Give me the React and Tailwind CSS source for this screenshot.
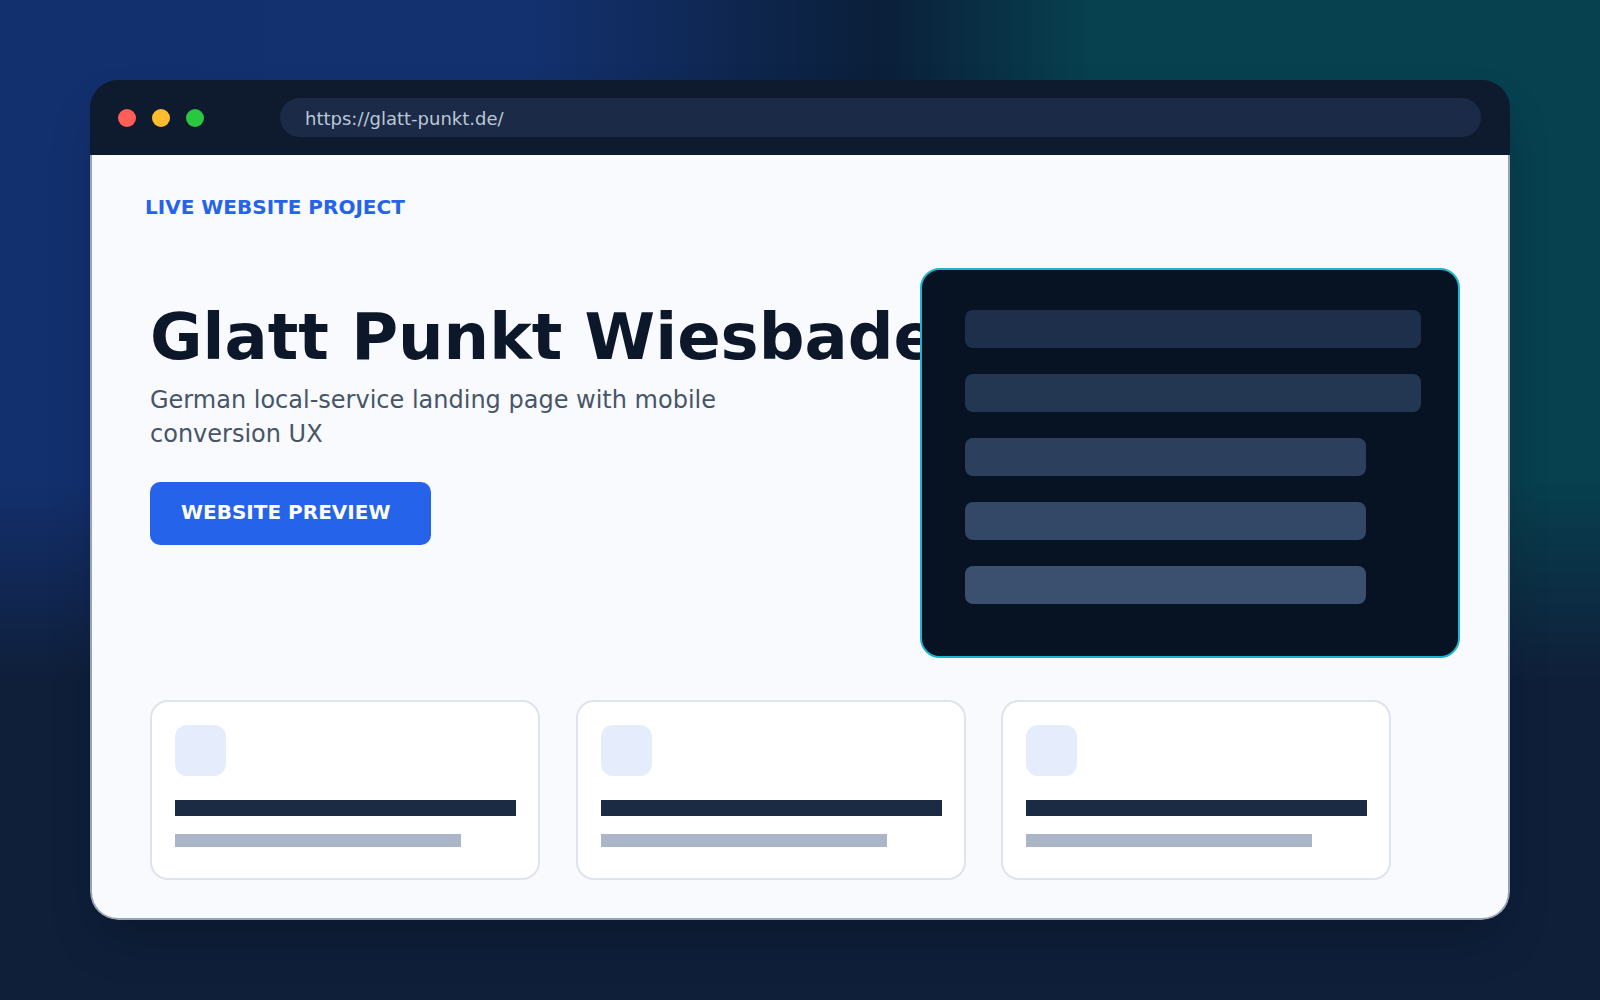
const bars = [
  { w: "w-[456px]", c: "bg-[#1e2f4b]" },
  { w: "w-[456px]", c: "bg-[#233652]" },
  { w: "w-[401px]", c: "bg-[#2c3f5c]" },
  { w: "w-[401px]", c: "bg-[#334866]" },
  { w: "w-[401px]", c: "bg-[#3b506e]" },
];

function FeatureCard() {
  return (
    <div className="w-[390px] h-[180px] shrink-0 rounded-[18px] border-2 border-[#dde4ee] bg-white p-[23px]">
      <div className="w-[51px] h-[51px] rounded-[12px] bg-[#e5edfd]" />
      <div className="mt-[24px] h-[16px] w-[341px] bg-[#1b2b44]" />
      <div className="mt-[18px] h-[13px] w-[286px] bg-[#aab6c8]" />
    </div>
  );
}

export default function App() {
  return (
    <div className="w-full h-[1000px] overflow-hidden bg-[#0f1f3a] [background-image:linear-gradient(to_bottom,transparent_48%,#0f1f3a_68%),linear-gradient(to_right,#13306e_0%,#13316f_33%,#0b1f3a_55%,#07404f_68%,#07404f_100%)] pt-[80px] px-[90px] font-['DejaVu_Sans',sans-serif]">
      {/* Browser window */}
      <div className="w-[1420px] h-[840px] flex flex-col rounded-[28px] overflow-hidden shadow-2xl">
        {/* Title bar */}
        <div className="h-[75px] shrink-0 flex items-center bg-[#0e1a2e] pl-[28px] pr-[29px]">
          <div className="flex gap-4">
            <span className="w-[18px] h-[18px] rounded-full bg-[#ff5f57]" />
            <span className="w-[18px] h-[18px] rounded-full bg-[#febc2e]" />
            <span className="w-[18px] h-[18px] rounded-full bg-[#28c840]" />
          </div>
          <div className="ml-[76px] flex-1 h-[39px] rounded-full bg-[#1b2b47] flex items-center pl-[25px] pt-[2px]">
            <span className="text-[18px] text-[#bcc7d6]">https://glatt-punkt.de/</span>
          </div>
        </div>

        {/* Page */}
        <div className="flex-1 flex flex-col bg-[#f8fafd] border-x-2 border-b-2 border-[#94a3b8] rounded-b-[28px] pl-[58px] pt-[42px]">
          <p className="-ml-[5px] text-[20px] leading-[20px] font-bold text-[#2563eb]">LIVE WEBSITE PROJECT</p>

          <div className="mt-[51px] flex">
            <div className="flex-1 min-w-0 pt-[32px]">
              <h1 className="whitespace-nowrap text-[64px] leading-[75px] font-bold text-[#0c1729]">
                Glatt Punkt Wiesbaden
              </h1>
              <p className="mt-[9px] max-w-[600px] text-[24px] leading-[1.4] text-[#475569]">
                German local-service landing page with mobile conversion UX
              </p>
              <button className="mt-[31px] w-[281px] h-[63px] rounded-[10px] bg-[#2563eb] flex items-center pl-[31px] pb-[3px]">
                <span className="text-[20px] leading-[20px] font-bold text-white">WEBSITE PREVIEW</span>
              </button>
            </div>

            {/* Preview panel */}
            <div className="relative z-10 shrink-0 w-[540px] h-[390px] mr-[48px] rounded-[20px] border-2 border-[#1cb5d0] bg-[#071222] pl-[43px] pt-[40px] flex flex-col gap-[26px]">
              {bars.map((b, i) => (
                <div key={i} className={`h-[38px] rounded-lg ${b.w} ${b.c}`} />
              ))}
            </div>
          </div>

          <div className="mt-[42px] flex gap-[35.5px]">
            <FeatureCard />
            <FeatureCard />
            <FeatureCard />
          </div>
        </div>
      </div>
    </div>
  );
}
